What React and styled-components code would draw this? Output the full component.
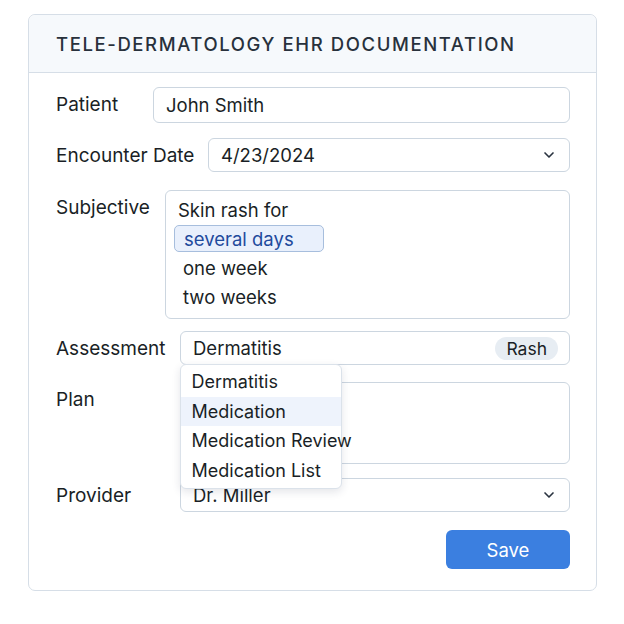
import React from "react";
import styled, { createGlobalStyle } from "styled-components";
import { ChevronDown } from "lucide-react";

const GlobalStyle = createGlobalStyle`
  body {
    margin: 0;
    background: #ffffff;
    font-family: Inter, "Open Sans", Arial, sans-serif;
    color: #1a1f26;
  }
`;

const subjectiveOptions = ["one week", "two weeks"];
const assessmentOptions = ["Dermatitis", "Medication", "Medication Review", "Medication List"];

const App = () => {
  return (
    <Page>
      <GlobalStyle />
      <Card>
        <Header>
          <Title>Tele-Dermatology EHR Documentation</Title>
        </Header>
        <Body>
          <Row>
            <Label w={97}>Patient</Label>
            <Field h={36}>John Smith</Field>
          </Row>
          <Row mt={15}>
            <Label w={152}>Encounter Date</Label>
            <Field>
              4/23/2024
              <Chevron size={16} strokeWidth={2.5} />
            </Field>
          </Row>
          <Row mt={16}>
            <Label w={109}>Subjective</Label>
            <Box h={129}>
              <BoxLine>Skin rash for</BoxLine>
              <Chip>several days</Chip>
              {subjectiveOptions.map((o) => (
                <Option key={o}>{o}</Option>
              ))}
            </Box>
          </Row>
          <Row mt={12}>
            <Label w={124}>Assessment</Label>
            <Field>
              Dermatitis
              <Tag>Rash</Tag>
              <Menu>
                {assessmentOptions.map((o) => (
                  <MenuItem key={o} active={o === "Medication"}>
                    {o}
                  </MenuItem>
                ))}
              </Menu>
            </Field>
          </Row>
          <Row mt={15}>
            <Label w={124}>Plan</Label>
            <Box h={82} />
          </Row>
          <Row mt={14}>
            <Label w={124}>Provider</Label>
            <Field>
              Dr. Miller
              <Chevron size={16} strokeWidth={2.5} />
            </Field>
          </Row>
          <Actions>
            <SaveButton>Save</SaveButton>
          </Actions>
        </Body>
      </Card>
    </Page>
  );
};

export default App;

const Page = styled.div`
  padding: 14px 0 0 28px;
`;

const Card = styled.div`
  width: 567px;
  border: 1.5px solid #d6dee7;
  border-radius: 7px;
`;

const Header = styled.div`
  height: 57px;
  display: flex;
  align-items: center;
  padding: 0 27px;
  background: #f6f9fc;
  border-bottom: 1.5px solid #d6dee7;
  border-radius: 7px 7px 0 0;
`;

const Title = styled.div`
  font-size: 18.5px;
  font-weight: 500;
  letter-spacing: 1.6px;
  text-transform: uppercase;
  color: #28313c;
`;

const Body = styled.div`
  display: flex;
  flex-direction: column;
  padding: 14px 26px 21px 27px;
`;

const Row = styled.div`
  display: flex;
  align-items: flex-start;
  margin-top: ${(p) => p.mt || 0}px;
`;

const Label = styled.div`
  flex: 0 0 ${(p) => p.w}px;
  line-height: 36px;
  font-size: 19px;
  color: #1a1f26;
`;

const Field = styled.div`
  position: relative;
  flex: 1;
  box-sizing: border-box;
  height: ${(p) => p.h || 34}px;
  display: flex;
  align-items: center;
  padding: 0 12px;
  font-size: 18.5px;
  border: 1.5px solid #ccd6e0;
  border-radius: 6px;
  background: #fff;
`;

const Chevron = styled(ChevronDown)`
  margin-left: auto;
  color: #2a3340;
`;

const Box = styled.div`
  flex: 1;
  height: ${(p) => p.h}px;
  border: 1.5px solid #ccd6e0;
  border-radius: 6px;
  padding: 6px 8px;
  box-sizing: border-box;
  display: flex;
  flex-direction: column;
  align-items: flex-start;
`;

const BoxLine = styled.div`
  font-size: 18.5px;
  line-height: 26px;
  padding-left: 4px;
`;

const Chip = styled.div`
  margin: 2px 0 2px;
  height: 29px;
  box-sizing: border-box;
  display: flex;
  align-items: center;
  padding: 0 29px 0 9px;
  font-size: 18.5px;
  color: #1f4a9c;
  background: #e9f0fc;
  border: 1.5px solid #a7bedd;
  border-radius: 5px;
`;

const Option = styled.div`
  font-size: 18.5px;
  line-height: 29px;
  padding-left: 9px;
`;

const Tag = styled.span`
  margin-left: auto;
  margin-right: -1px;
  padding: 1px 11px;
  font-size: 17.5px;
  background: #e7edf3;
  border-radius: 12px;
`;

const Menu = styled.div`
  position: absolute;
  top: 32px;
  left: -1.5px;
  width: 160px;
  background: #fff;
  border: 1px solid #dbe2ea;
  border-radius: 6px;
  box-shadow: 0 3px 8px rgba(30, 45, 70, 0.12);
  padding: 2px 0 3px;
  z-index: 2;
`;

const MenuItem = styled.div`
  font-size: 18px;
  line-height: 29.5px;
  padding-left: 11px;
  white-space: nowrap;
  background: ${(p) => (p.active ? "#eef3fc" : "transparent")};
`;

const Actions = styled.div`
  display: flex;
  justify-content: flex-end;
  margin-top: 16px;
`;

const SaveButton = styled.button`
  width: 124px;
  height: 39px;
  border: none;
  border-radius: 6px;
  background: #3b7fe0;
  color: #fff;
  font-family: inherit;
  font-size: 18.5px;
`;
